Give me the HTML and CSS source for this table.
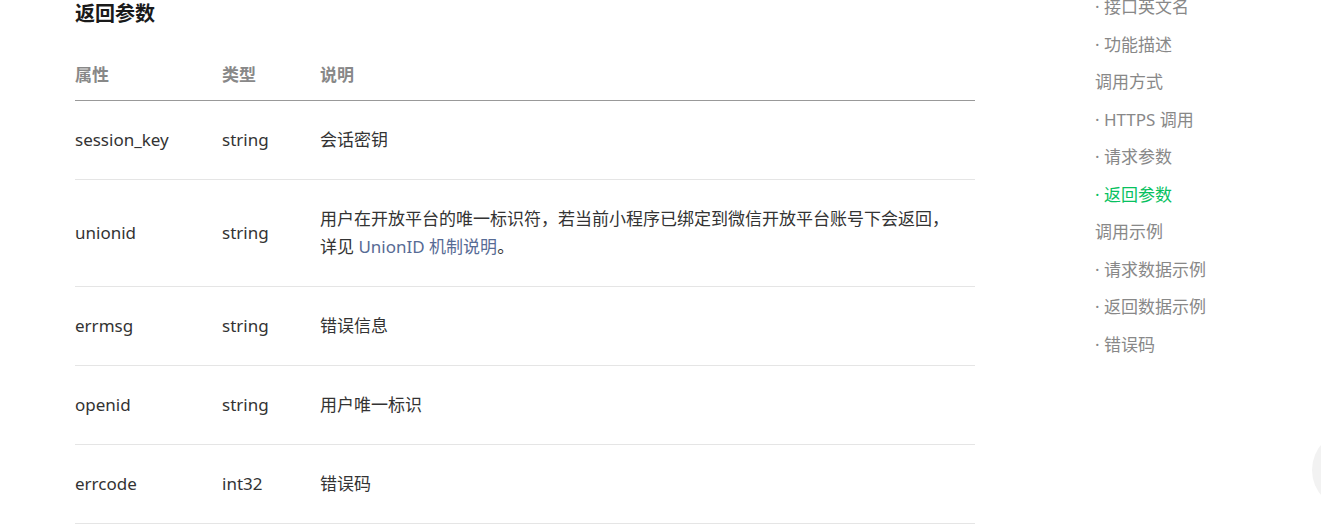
FILE: index.html
```html
<!DOCTYPE html>
<html lang="zh-CN">
  <head>
    <meta charset="UTF-8" />
    <meta name="viewport" content="width=device-width, initial-scale=1.0" />
    <title>返回参数</title>
    <link rel="stylesheet" href="styles.css">
  </head>
  <body>
    <div class="page">
      <div class="content">
        <h3 class="section-title">返回参数</h3>
        <table class="params">
          <thead>
            <tr>
              <th class="col-name">属性</th>
              <th class="col-type">类型</th>
              <th>说明</th>
            </tr>
          </thead>
          <tbody>
            <tr>
              <td>session_key</td>
              <td>string</td>
              <td>会话密钥</td>
            </tr>
            <tr>
              <td>unionid</td>
              <td>string</td>
              <td>用户在开放平台的唯一标识符，若当前小程序已绑定到微信开放平台账号下会返回，详见 <a href="#">UnionID 机制说明</a>。</td>
            </tr>
            <tr>
              <td>errmsg</td>
              <td>string</td>
              <td>错误信息</td>
            </tr>
            <tr>
              <td>openid</td>
              <td>string</td>
              <td>用户唯一标识</td>
            </tr>
            <tr>
              <td>errcode</td>
              <td>int32</td>
              <td>错误码</td>
            </tr>
          </tbody>
        </table>
      </div>

      <ul class="toc">
        <li>· 接口英文名</li>
        <li>· 功能描述</li>
        <li>调用方式</li>
        <li>· HTTPS 调用</li>
        <li>· 请求参数</li>
        <li class="active">· 返回参数</li>
        <li>调用示例</li>
        <li>· 请求数据示例</li>
        <li>· 返回数据示例</li>
        <li>· 错误码</li>
      </ul>
    </div>

    <div class="back-top"></div>
  </body>
</html>
```

FILE: styles.css
```css
body {
  margin: 0;
  background: #fff;
  color: #333;
  font-family: "Noto Sans", "Noto Sans CJK SC", sans-serif;
  font-size: 17px;
  overflow: hidden;
}
.page {
  display: flex;
  align-items: flex-start;
}
.content {
  width: 900px;
  padding-left: 75px;
}
.section-title {
  margin: 0;
  font-size: 20px;
  line-height: 28px;
  font-weight: bold;
  color: #1a1a1a;
}
.params {
  width: 900px;
  margin-top: 22px;
  border-collapse: collapse;
  line-height: 28px;
}
.params th {
  text-align: left;
  padding: 11px 0;
  color: #888;
  font-weight: bold;
  border-bottom: 1px solid #999;
}
.params td {
  padding: 25px 16px 25px 0;
  vertical-align: middle;
  border-bottom: 1px solid #e5e5e5;
}
.col-name {
  width: 147px;
}
.col-type {
  width: 98px;
}
.params a {
  color: #576b95;
  text-decoration: none;
}
.toc {
  list-style: none;
  margin: -12px 0 0 120px;
  padding: 0;
  color: #888;
  font-size: 17px;
  line-height: 37.5px;
}
.toc .active {
  color: #07c160;
}
.back-top {
  position: fixed;
  left: 1312px;
  top: 430px;
  width: 80px;
  height: 80px;
  border-radius: 50%;
  background: #f2f2f2;
}
```
